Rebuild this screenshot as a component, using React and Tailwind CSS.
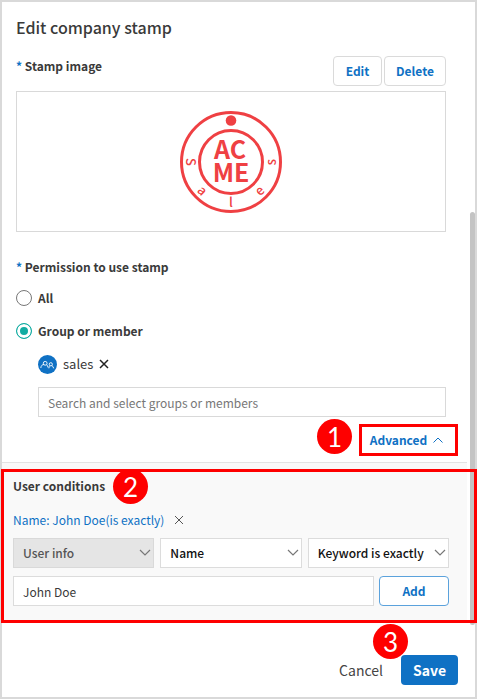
import React, { useState } from "react";

function Marker({ children, className }) {
  return (
    <span
      className={
        "absolute z-10 flex size-[35px] items-center justify-center rounded-full bg-[#fe0000] font-['Lato',sans-serif] text-[26px] leading-none text-white " +
        className
      }
    >
      {children}
    </span>
  );
}

function Cross({ className, width = 1 }) {
  return (
    <svg viewBox="0 0 10 10" className={className} fill="none" stroke="currentColor" strokeWidth={width} aria-hidden="true">
      <path d="M1 1l8 8M9 1l-8 8" />
    </svg>
  );
}

function Dropdown({ label, value, muted }) {
  return (
    <div className="relative min-w-0 flex-1">
      <select
        aria-label={label}
        className={
          "block h-[30px] w-full appearance-none border pl-[9px] text-xs font-medium " +
          (muted ? "border-[#d9d9d9] bg-[#e5e5e5] text-[#555555]" : "border-[#dcdcdc] bg-white text-[#111111]")
        }
      >
        <option>{value}</option>
      </select>
      <svg
        viewBox="0 0 12 8"
        className="pointer-events-none absolute top-[11px] right-[3px] h-2 w-3"
        fill="none"
        stroke="#777777"
        strokeWidth="1.2"
        aria-hidden="true"
      >
        <path d="M1 1l5 5 5-5" />
      </svg>
    </div>
  );
}

function Stamp() {
  const letters = [
    ["S", 90],
    ["a", 45],
    ["l", 0],
    ["e", -45],
    ["s", -90],
  ];
  return (
    <svg viewBox="0 0 104 104" className="size-[104px]" role="img" aria-label="ACME Sales stamp">
      <g fill="none" stroke="#ef4043" strokeWidth="3">
        <circle cx="52" cy="52" r="49.5" />
        <circle cx="52" cy="52" r="31.5" />
      </g>
      <circle cx="52" cy="10.500" r="5.300" fill="#ef4043" />
      <g fill="#ef4043" textAnchor="middle">
        <text x="51" y="49" fontSize="25" fontWeight="700">AC</text>
        <text x="52" y="72" fontSize="25" fontWeight="700">ME</text>
        {letters.map(([c, a]) => (
          <text key={c} x="52" y="97" fontSize="13" fontWeight="500" transform={`rotate(${a} 52 52)`}>
            {c}
          </text>
        ))}
      </g>
    </svg>
  );
}

function Radio({ label, value, current, onChange }) {
  return (
    <label className="flex h-5 w-fit items-center gap-1.5 font-bold">
      <input
        type="radio"
        name="permission"
        checked={current === value}
        onChange={() => onChange(value)}
        className="size-4 appearance-none rounded-full border border-[#777777] bg-white checked:border-[#12aca2] checked:bg-[#12aca2] checked:shadow-[inset_0_0_0_3px_#fff]"
      />
      {label}
    </label>
  );
}

export default function App() {
  const [permission, setPermission] = useState("group");
  return (
    <main className="relative border-2 border-[#d9d9d9] bg-white font-['Noto_Sans_CJK_JP','Noto_Sans',sans-serif] text-xs leading-5 text-[#3a3a3a]">
      <div className="pt-[13px] pr-[29px] pl-[14px]">
        <h1 className="text-base leading-6 font-medium">Edit company stamp</h1>

        <div className="mt-[17px] flex items-start justify-between">
          <h2 className="font-bold">
            <span className="text-[#0f71c4]">*</span> Stamp image
          </h2>
          <div className="flex gap-0.5">
            <button type="button" className="h-[30px] w-[49px] rounded border border-[#dadada] font-bold text-[#0f71c4]">
              Edit
            </button>
            <button type="button" className="h-[30px] w-[62px] rounded border border-[#dadada] font-bold text-[#0f71c4]">
              Delete
            </button>
          </div>
        </div>
        <div className="mt-[5px] flex h-[141px] items-center justify-center border border-[#d9d9d9]">
          <Stamp />
        </div>

        <fieldset className="mt-[25px]">
          <legend className="font-bold">
            <span className="text-[#0f71c4]">*</span> Permission to use stamp
          </legend>
          <div className="flex flex-col gap-[13px] pt-[11px]">
            <Radio label="All" value="all" current={permission} onChange={setPermission} />
            <Radio label="Group or member" value="group" current={permission} onChange={setPermission} />
          </div>
        </fieldset>

        <div className="mt-[13px] ml-[22px]">
          <div className="flex h-5 items-center">
            <svg viewBox="0 0 19 19" className="size-[19px]" fill="none" aria-hidden="true">
              <circle cx="9.500" cy="9.500" r="9.500" fill="#0f71c4" />
              <g stroke="#ffffff" strokeWidth="0.900">
                <circle cx="7.200" cy="8.300" r="1.900" />
                <path d="M2.800 13c.3-2.400 1.400-3.500 3.200-3.500M8.600 9.800c.9.600 1.300 1.500 1.400 2.700" />
                <circle cx="12.800" cy="9.300" r="1.600" />
                <path d="M10.900 13.300c0-1.300.4-2.200 1.200-2.700M13.900 10.600c1 .5 1.500 1.400 1.700 2.700" />
              </g>
            </svg>
            <span className="ml-1.5 text-[13px]">sales</span>
            <button type="button" aria-label="Remove sales" className="ml-1.5 text-[#222222]">
              <Cross className="size-2.5" width={1.5} />
            </button>
          </div>
          <input
            type="text"
            aria-label="Search and select groups or members"
            placeholder="Search and select groups or members"
            className="mt-[13px] block h-[30px] w-full border border-[#d9d9d9] bg-white px-[9px] placeholder:text-[#777777]"
          />
        </div>
      </div>

      <div className="mt-[7px] mr-[17px] flex justify-end">
        <div className="relative">
          <Marker className="top-[-5px] right-[106px]">1</Marker>
          <button
            type="button"
            aria-expanded="true"
            className="flex h-8 w-[99px] items-center justify-center gap-1.5 border-3 border-[#fe0000] pr-1 font-bold text-[#0f71c4]"
          >
            Advanced
            <svg viewBox="0 0 10 6" className="h-1.5 w-2.5" fill="none" stroke="currentColor" aria-hidden="true">
              <path d="M.5 5.500L5 1l4.500 4.500" />
            </svg>
          </button>
        </div>
      </div>

      <section className="relative mt-1.5 mr-2 border-t border-[#e3e3e3] bg-[#f9f9f9] pt-[13px] pr-[18px] pb-3.5 pl-[11px]">
        <div className="pointer-events-none absolute top-1.5 right-[-10px] bottom-[-3px] left-[-1px] z-10 border-3 border-[#fe0000]" />
        <Marker className="top-[6px] left-[111px]">2</Marker>
        <h2 className="font-bold">User conditions</h2>
        <div className="mt-3.5 flex items-center gap-2.5 text-[#0f71c4]">
          <span>Name: John Doe(is exactly)</span>
          <button type="button" aria-label="Remove condition" className="text-[#555555]">
            <Cross className="size-2.5" />
          </button>
        </div>
        <div className="mt-2 flex gap-1.5">
          <Dropdown label="Condition type" value="User info" muted />
          <Dropdown label="Field" value="Name" />
          <Dropdown label="Match" value="Keyword is exactly" />
        </div>
        <div className="mt-2 flex gap-[5px]">
          <input
            type="text"
            aria-label="Keyword"
            defaultValue="John Doe"
            className="h-[30px] min-w-0 flex-1 border border-[#dcdcdc] bg-white px-[9px]"
          />
          <button type="button" className="h-[30px] w-[70px] rounded border border-[#5ba2dc] bg-white font-bold text-[#0f71c4]">
            Add
          </button>
        </div>
      </section>

      <div className="absolute top-[210px] right-0 h-[413px] w-[5px] rounded-full bg-[#c4c4c4]" />

      <footer className="relative flex items-center justify-end gap-[18px] pt-[35px] pr-[17px] pb-3 text-sm">
        <Marker className="top-[4px] right-[67px]">3</Marker>
        <button type="button" className="text-[#444444]">Cancel</button>
        <button type="button" className="h-[30px] w-[57px] rounded bg-[#0f71c4] font-bold text-white">
          Save
        </button>
      </footer>
    </main>
  );
}
